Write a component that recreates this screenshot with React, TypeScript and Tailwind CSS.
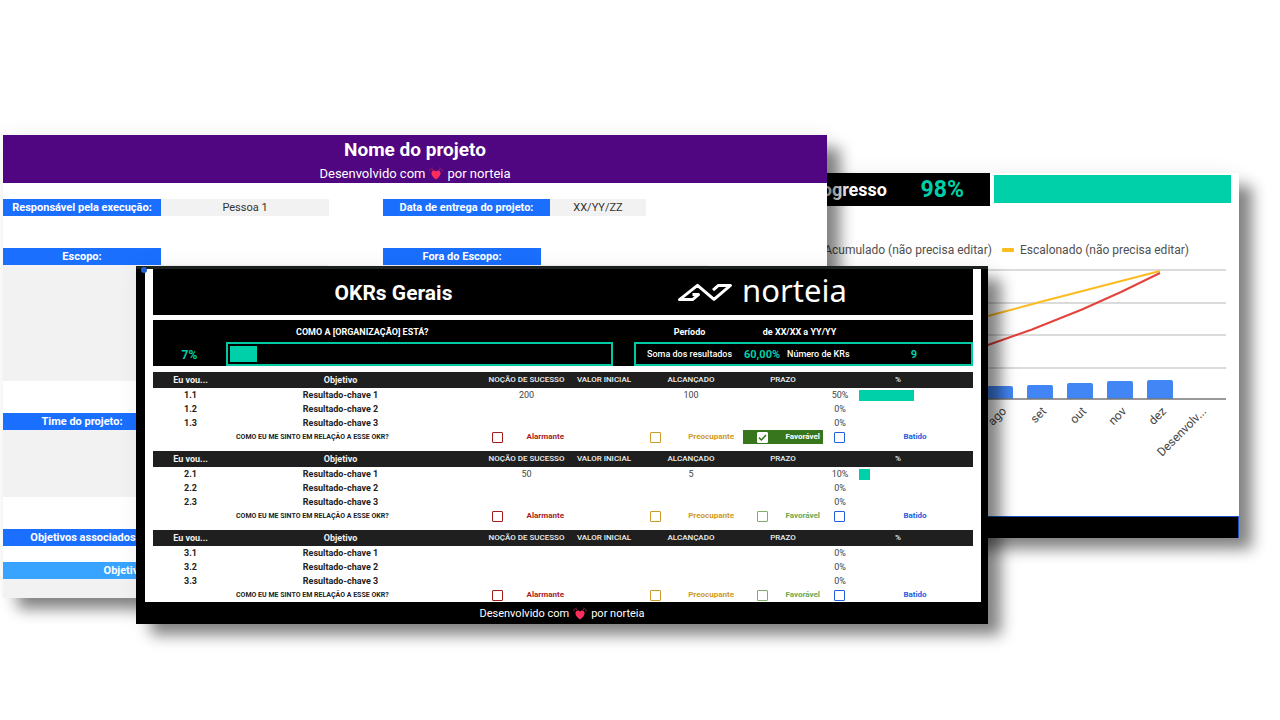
import React, { useState } from "react";

type Feeling = {
  name: string;
  text: string;
  border: string;
  align: string;
};

type KeyResult = {
  id: string;
  name: string;
  success?: string;
  reached?: string;
  percent: number;
};

const FEELINGS: Feeling[] = [
  { name: "Alarmante", text: "text-[#a61c1c]", border: "border-[#a61c1c]", align: "text-right pr-[5px]" },
  { name: "Preocupante", text: "text-[#cf9a25]", border: "border-[#cf9a25]", align: "text-right pr-[9px]" },
  { name: "Favorável", text: "text-[#6aa84f]", border: "border-[#7fae68]", align: "text-right pr-[3px]" },
  { name: "Batido", text: "text-[#2260dd]", border: "border-[#2260dd]", align: "text-center" },
];

const OBJECTIVES: { results: KeyResult[]; feeling?: string }[] = [
  {
    feeling: "Favorável",
    results: [
      { id: "1.1", name: "Resultado-chave 1", success: "200", reached: "100", percent: 50 },
      { id: "1.2", name: "Resultado-chave 2", percent: 0 },
      { id: "1.3", name: "Resultado-chave 3", percent: 0 },
    ],
  },
  {
    results: [
      { id: "2.1", name: "Resultado-chave 1", success: "50", reached: "5", percent: 10 },
      { id: "2.2", name: "Resultado-chave 2", percent: 0 },
      { id: "2.3", name: "Resultado-chave 3", percent: 0 },
    ],
  },
  {
    results: [
      { id: "3.1", name: "Resultado-chave 1", percent: 0 },
      { id: "3.2", name: "Resultado-chave 2", percent: 0 },
      { id: "3.3", name: "Resultado-chave 3", percent: 0 },
    ],
  },
];

const MONTHS = [
  { name: "mai", height: 8 },
  { name: "jun", height: 10 },
  { name: "jul", height: 12 },
  { name: "ago", height: 13 },
  { name: "set", height: 14 },
  { name: "out", height: 16 },
  { name: "nov", height: 18 },
  { name: "dez", height: 19 },
];

function Heart() {
  return (
    <svg viewBox="0 0 14 14" className="h-[14px] w-[14px]" aria-hidden="true">
      <path
        d="M7 12.6C4.8 11 2.4 8.6 2.4 6c0-1.6 1.1-2.6 2.3-2.6 1 0 1.8.5 2.3 1.4.5-.9 1.3-1.4 2.3-1.4 1.2 0 2.3 1 2.3 2.6 0 2.6-2.4 5-4.6 6.6z"
        fill="#fb2e5c"
      />
      <path d="M.7 4.2C.9 2.6 2 1.3 3.6 1M13.3 4.2C13.1 2.6 12 1.3 10.4 1M3 2.9l1-.7M11 2.9l-1-.7" stroke="#b3224f" strokeWidth=".9" fill="none" />
    </svg>
  );
}

function Credit() {
  return (
    <p className="flex items-center justify-center gap-1">
      <span>Desenvolvido com</span>
      <Heart />
      <span>por norteia</span>
    </p>
  );
}

function Logo() {
  return (
    <div className="flex items-center gap-2 pb-1 text-white">
      <svg viewBox="0 0 58 20" className="mt-[4px] h-[20px] w-[58px]" aria-hidden="true">
        <path
          d="M16.5 12.6H22.5L16.5 17.6H3.5L21.5 3.4 38 17.4 54.5 3.4H42.5L37 8.2"
          fill="none"
          stroke="currentColor"
          strokeWidth="3"
          strokeLinejoin="round"
        />
      </svg>
      <span className="font-['Noto_Sans',sans-serif] text-[31px] leading-[40px]">norteia</span>
    </div>
  );
}

function Label({ children, className = "" }: { children: React.ReactNode; className?: string }) {
  return (
    <div className={`h-[17px] truncate bg-[#1a6fff] text-center text-[11px] leading-[18px] font-bold text-white ${className}`}>
      {children}
    </div>
  );
}

function Value({ children, className = "" }: { children: React.ReactNode; className?: string }) {
  return (
    <div className={`h-[17px] bg-[#f2f2f2] text-center text-[11px] leading-[18px] text-[#333] ${className}`}>{children}</div>
  );
}

function ProjectSheet() {
  return (
    <section className="absolute top-[135px] right-[453px] left-[3px] bg-white shadow-[14px_12px_14px_-1px_rgba(0,0,0,0.48),0_0_20px_rgba(0,0,0,0.06)]">
      <header className="h-[48px] bg-[#500581] text-center text-white">
        <h1 className="pt-[3px] text-[19px] leading-[24px] font-bold">Nome do projeto</h1>
        <div className="text-[13px] leading-[24px]">
          <Credit />
        </div>
      </header>
      <div className="mt-4 flex">
        <Label className="w-[158px]">Responsável pela execução:</Label>
        <Value className="w-[168px]">Pessoa 1</Value>
        <Label className="ml-[54px] w-[167px]">Data de entrega do projeto:</Label>
        <Value className="w-[96px]">XX/YY/ZZ</Value>
      </div>
      <div className="mt-8 flex">
        <div className="w-[326px]">
          <Label className="w-[158px]">Escopo:</Label>
          <div className="h-[116px] bg-[#f2f2f2]" />
        </div>
        <div className="ml-[54px] w-[326px]">
          <Label className="w-[158px]">Fora do Escopo:</Label>
          <div className="h-[116px] bg-[#f2f2f2]" />
        </div>
      </div>
      <div className="mt-8 w-[326px]">
        <Label className="w-[158px]">Time do projeto:</Label>
        <div className="h-[67px] bg-[#f2f2f2]" />
      </div>
      <Label className="mt-8 w-[163px]">Objetivos associados:</Label>
      <div className="mt-4 w-[242px]">
        <div className="h-[17px] bg-[#38a4ff] text-center text-[11px] leading-[18px] font-bold text-white">Objetivo</div>
        <div className="h-[19px] bg-[#f2f2f2]" />
      </div>
    </section>
  );
}

function ProgressChart() {
  return (
    <svg viewBox="0 0 627 248" className="h-[248px] w-[627px]" role="img" aria-label="Progresso acumulado e escalonado por mês">
      {[2, 35, 67, 100].map((y) => (
        <line key={y} x1="20" x2="627" y1={y} y2={y} stroke="#cfcfcf" strokeWidth="1.4" />
      ))}
      {MONTHS.map((month, i) => (
        <g key={month.name}>
          <path
            d={`M${268 + i * 40} 131v-${month.height - 2}q0-2 2-2h22q2 0 2 2v${month.height - 2}z`}
            fill="#4285f4"
          />
          <text transform={`translate(${288 + i * 40} 144) rotate(-45)`} textAnchor="end" fontSize="12" fill="#444">
            {month.name}
          </text>
        </g>
      ))}
      <text transform="translate(608 144) rotate(-45)" textAnchor="end" fontSize="12" fill="#444">
        Desenvolv...
      </text>
      <line x1="20" x2="627" y1="131" y2="131" stroke="#777" strokeWidth="1.4" />
      <path d="M270 79 389 48 441 34 561 3" fill="none" stroke="#fbbc1f" strokeWidth="2" />
      <path d="M270 113 389 77 433 61.5 483 41.5 522 24 561 5" fill="none" stroke="#e2443b" strokeWidth="2" strokeLinejoin="round" />
    </svg>
  );
}

function ProgressSheet() {
  return (
    <section className="absolute top-[173px] right-[41px] left-[599px] bg-white shadow-[14px_12px_14px_-1px_rgba(0,0,0,0.48),0_0_20px_rgba(0,0,0,0.06)]">
      <header className="flex gap-1 pr-2">
        <div className="flex h-[33px] flex-1 items-center justify-end bg-black pr-[26px] font-bold">
          <h2 className="text-[18px] text-white">Progresso</h2>
          <span className="w-[77px] pt-[2px] text-right text-[23px] text-[#00d0a9]">98%</span>
        </div>
        <div className="mt-[2px] h-[28px] w-[237px] bg-[#00d0a9]" />
      </header>
      <div className="mt-[34px] flex h-[20px] items-center justify-end gap-[10px] pr-[50px] text-[12px] text-[#505050]">
        <span className="flex items-center gap-[6px]">
          <i className="h-[4px] w-[12px] bg-[#e2443b]" />
          Acumulado (não precisa editar)
        </span>
        <span className="flex items-center gap-[6px]">
          <i className="h-[4px] w-[12px] rounded-[1px] bg-[#fbbc1f]" />
          Escalonado (não precisa editar)
        </span>
      </div>
      <div className="flex justify-end pt-[8px] pr-[13px]">
        <ProgressChart />
      </div>
      <footer className="h-[22px] border-t border-r border-[#1a56c4] bg-black" />
    </section>
  );
}

function FeelingCells({ group, feeling, active, onToggle }: { group: number; feeling: Feeling; active: boolean; onToggle: () => void }) {
  const id = `okr-${group}-${feeling.name}`;
  const fill = active ? "bg-[#38761d]" : "";
  return (
    <>
      <td className={`p-0 ${fill}`}>
        <span className="grid place-items-center">
          <input
            id={id}
            type="checkbox"
            checked={active}
            onChange={onToggle}
            className={`col-start-1 row-start-1 h-[11px] w-[11px] appearance-none rounded-[1px] border bg-white ${active ? "border-white" : feeling.border}`}
          />
          {active && (
            <svg viewBox="0 0 11 11" className="pointer-events-none col-start-1 row-start-1 h-[11px] w-[11px]" aria-hidden="true">
              <path d="M2 5.6 4.4 8 9 3" fill="none" stroke="#38761d" strokeWidth="1.5" />
            </svg>
          )}
        </span>
      </td>
      <td className={`p-0 text-[8px] font-bold ${feeling.align} ${active ? "bg-[#38761d] text-white" : feeling.text}`}>
        <label htmlFor={id}>{feeling.name}</label>
      </td>
    </>
  );
}

function OkrTable() {
  const [feelings, setFeelings] = useState<(string | undefined)[]>(OBJECTIVES.map((o) => o.feeling));
  return (
    <table className="w-full table-fixed border-collapse text-center text-[9px] leading-[14px] text-[#222]">
      <colgroup>
        <col className="w-[75px]" />
        <col />
        <col className="w-[31px]" />
        <col className="w-[28px]" />
        <col className="w-[57px]" />
        <col className="w-[70px]" />
        <col className="w-[34px]" />
        <col className="w-[70px]" />
        <col className="w-[40px]" />
        <col className="w-[40px]" />
        <col className="w-[34px]" />
        <col className="w-[116px]" />
      </colgroup>
      {OBJECTIVES.map((objective, g) => (
        <tbody key={g}>
          <tr className="h-[16px] bg-[#1f1f1f] text-[8px] whitespace-nowrap text-[#f0f0f0]">
            <th className="p-0 text-[9px] font-bold">Eu vou...</th>
            <th className="p-0 text-[9px] font-bold">Objetivo</th>
            <th className="p-0" />
            <th colSpan={2} className="p-0 font-medium">NOÇÃO DE SUCESSO</th>
            <th className="p-0 font-medium">VALOR INICIAL</th>
            <th colSpan={2} className="p-0 font-medium">ALCANÇADO</th>
            <th colSpan={2} className="p-0 font-medium">PRAZO</th>
            <th colSpan={2} className="p-0 font-medium">%</th>
          </tr>
          {objective.results.map((result) => (
            <tr key={result.id} className="h-[14px] text-[#444]">
              <td className="p-0 font-bold text-[#222]">{result.id}</td>
              <td className="p-0 font-bold text-[#222]">{result.name}</td>
              <td className="p-0" />
              <td colSpan={2} className="p-0">{result.success}</td>
              <td className="p-0" />
              <td colSpan={2} className="p-0">{result.reached}</td>
              <td colSpan={2} className="p-0" />
              <td className="p-0">{result.percent}%</td>
              <td className="p-0 pr-[4px] pl-[2px]">
                <div className="h-[11px] bg-[#00d0a9]" style={{ width: `${result.percent}%` }} />
              </td>
            </tr>
          ))}
          <tr className="h-[14px]">
            <td className="p-0" />
            <td className="p-0 pl-[8px] text-left text-[7px] font-bold whitespace-nowrap">COMO EU ME SINTO EM RELAÇÃO A ESSE OKR?</td>
            <td className="p-0" />
            {FEELINGS.slice(0, 1).map((feeling) => (
              <FeelingCells
                key={feeling.name}
                group={g}
                feeling={feeling}
                active={feelings[g] === feeling.name}
                onToggle={() => setFeelings(feelings.map((f, i) => (i !== g ? f : f === feeling.name ? undefined : feeling.name)))}
              />
            ))}
            <td className="p-0" />
            {FEELINGS.slice(1).map((feeling) => (
              <FeelingCells
                key={feeling.name}
                group={g}
                feeling={feeling}
                active={feelings[g] === feeling.name}
                onToggle={() => setFeelings(feelings.map((f, i) => (i !== g ? f : f === feeling.name ? undefined : feeling.name)))}
              />
            ))}
          </tr>
          {g < OBJECTIVES.length - 1 && (
            <tr className="h-[7px]">
              <td colSpan={12} className="p-0" />
            </tr>
          )}
        </tbody>
      ))}
    </table>
  );
}

function OkrSheet() {
  return (
    <section className="absolute top-[266px] right-[292px] left-[136px] border-t-[3px] border-[#1d211e] bg-black shadow-[14px_12px_14px_-1px_rgba(0,0,0,0.48),0_0_20px_rgba(0,0,0,0.06)]">
      <span className="absolute top-[-2px] left-[5px] h-[6px] w-[6px] rounded-full bg-[#1f5fd0]" />
      <div className="mr-[7px] ml-[9px] bg-white px-2">
        <header className="flex h-[46px] items-center bg-black text-white">
          <h2 className="flex-1 pt-1 text-center text-[21px] font-bold">OKRs Gerais</h2>
          <div className="flex w-[339px] justify-center pr-[84px]">
            <Logo />
          </div>
        </header>
        <div className="mt-[5px] flex h-[46px] justify-between bg-black text-[9px] text-white">
          <div className="w-[460px]">
            <p className="h-[22px] pl-[143px] leading-[24px] font-bold">COMO A [ORGANIZAÇÃO] ESTÁ?</p>
            <div className="flex">
              <span className="w-[73px] text-center text-[12px] leading-[26px] font-bold text-[#00d0a9]">7%</span>
              <div className="h-[24px] flex-1 border-2 border-[#00c9a3] p-[2px]">
                <div className="h-full w-[7%] bg-[#00d0a9]" />
              </div>
            </div>
          </div>
          <div className="w-[339px]">
            <p className="flex h-[22px] leading-[24px] font-bold">
              <span className="w-[111px] text-center">Período</span>
              <span className="w-[109px] text-center">de XX/XX a YY/YY</span>
            </p>
            <p className="flex h-[24px] items-center border-2 border-[#00c9a3] pt-[2px] pl-[11px] font-medium whitespace-nowrap">
              <span className="w-[97px]">Soma dos resultados</span>
              <b className="w-[43px] text-[11px] text-[#00d0a9]">60,00%</b>
              <span className="w-[70px]">Número de KRs</span>
              <b className="flex-1 text-center text-[11px] text-[#00d0a9]">9</b>
            </p>
          </div>
        </div>
        <div className="pt-[6px]">
          <OkrTable />
        </div>
      </div>
      <footer className="h-[22px] text-[11px] leading-[23px] text-white">
        <Credit />
      </footer>
    </section>
  );
}

export default function App() {
  return (
    <main className="relative min-h-screen overflow-hidden bg-white font-[Roboto,sans-serif]">
      <ProgressSheet />
      <ProjectSheet />
      <OkrSheet />
    </main>
  );
}
